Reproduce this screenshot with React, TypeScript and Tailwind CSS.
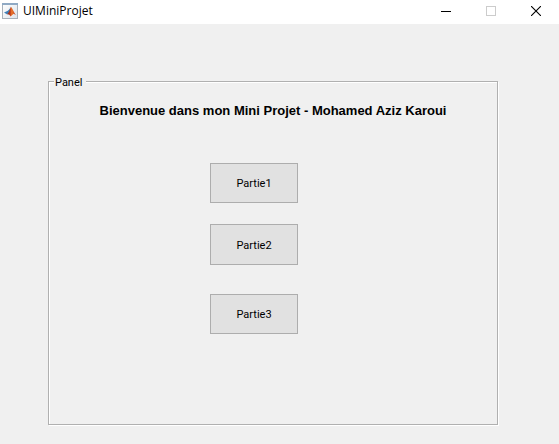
import { useState } from "react";

const parts = [
  { label: "Partie1", className: "h-10" },
  { label: "Partie2", className: "mt-[21px] h-[41px]" },
  { label: "Partie3", className: "mt-[29px] h-10" },
];

function MatlabIcon() {
  return (
    <svg className="h-4 w-4" viewBox="0 0 16 16" aria-hidden="true">
      <defs>
        <linearGradient id="frame" x1="0" y1="0" x2="1" y2="1">
          <stop offset="0" stopColor="#ffffff" />
          <stop offset="1" stopColor="#dde3ea" />
        </linearGradient>
        <linearGradient id="peak" x1="0" y1="0" x2="1" y2="0">
          <stop offset="0" stopColor="#8a3020" />
          <stop offset="0.35" stopColor="#b8371c" />
          <stop offset="0.55" stopColor="#ee7a2c" />
          <stop offset="1" stopColor="#b5301a" />
        </linearGradient>
      </defs>
      <rect x="0.5" y="0.5" width="15" height="15" fill="url(#frame)" stroke="#a9b1ba" />
      <rect x="0" y="0" width="16" height="2" fill="#8fa9c4" />
      <path d="M2 9.6 L5.4 8 L7.2 6.6 L8.8 4 L7.8 8.8 L5.2 11.4 Z" fill="#3f7fb8" />
      <path d="M5 11.4 L7 8.8 L8.9 3.8 C10.2 4.6 11.6 9.2 13.8 12 L11.6 10.8 L8.6 13.4 C7.8 12 6.6 11.2 5 11.4 Z" fill="url(#peak)" />
    </svg>
  );
}

export default function App() {
  const [selected, setSelected] = useState("");

  return (
    <div className="flex min-h-screen flex-col bg-[#f0f0f0] text-black">
      <header className="flex h-6 items-center bg-white pb-[2px] pl-[2px]">
        <MatlabIcon />
        <h1 className="ml-[5px] flex-1 font-['Open_Sans','Noto_Sans',sans-serif] text-[12px] leading-4">
          UIMiniProjet
        </h1>
        <button type="button" aria-label="Minimize" className="flex h-full w-[46px] items-center justify-center">
          <svg className="h-[10px] w-[10px]" viewBox="0 0 10 10" shapeRendering="crispEdges">
            <path d="M0 5.5H10" stroke="#000" />
          </svg>
        </button>
        <button type="button" aria-label="Maximize" disabled className="flex h-full w-[44px] items-center justify-center">
          <svg className="h-[10px] w-[10px]" viewBox="0 0 10 10" shapeRendering="crispEdges">
            <rect x="0.5" y="0.5" width="9" height="9" fill="none" stroke="#ccc" />
          </svg>
        </button>
        <button type="button" aria-label="Close" className="flex h-full w-[46px] items-center justify-center">
          <svg className="h-[10px] w-[10px]" viewBox="0 0 10 10">
            <path d="M0 0L10 10M10 0L0 10" stroke="#000" strokeWidth="1.1" />
          </svg>
        </button>
      </header>

      <main className="flex flex-1 flex-col pt-12 pr-[61px] pb-[19px] pl-12 font-[Roboto,'Liberation_Sans',sans-serif]">
        <fieldset className="flex-1 border border-[#b0b0b0] px-[5px] shadow-[1px_1px_0_#fff,inset_1px_1px_0_#fff]">
          <legend className="bg-[#f0f0f0] pt-1 pr-1 pl-px text-[11px] leading-[14px]">Panel</legend>
          <h2 className="mt-3 text-center font-['Liberation_Sans',Arial,sans-serif] text-[13px] leading-[18px] font-bold">
            Bienvenue dans mon Mini Projet - Mohamed Aziz Karoui
          </h2>
          <div className="mt-[43px] flex flex-col items-center pr-[38px]">
            {parts.map((part) => (
              <button
                key={part.label}
                type="button"
                aria-pressed={selected === part.label}
                onClick={() => setSelected(part.label)}
                className={`w-[88px] border border-[#adadad] bg-[#e1e1e1] pt-[2px] text-[11px] leading-[14px] ${part.className}`}
              >
                {part.label}
              </button>
            ))}
          </div>
        </fieldset>
      </main>
    </div>
  );
}
